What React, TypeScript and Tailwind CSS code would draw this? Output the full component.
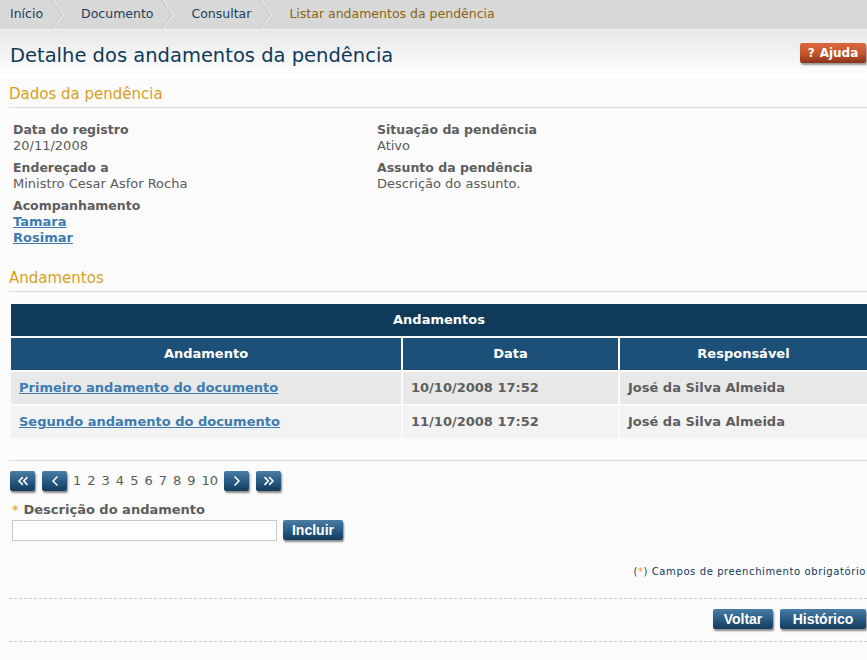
import { ChevronLeft, ChevronRight, ChevronsLeft, ChevronsRight } from 'lucide-react';

const verdana = { fontFamily: 'Verdana, "DejaVu Sans", sans-serif' };

const Sep = () => (
  <svg width="20" height="29" viewBox="0 0 20 29" className="shrink-0 block">
    <polyline points="4,0 14,14.5 4,29" fill="none" stroke="#b8b8b8" strokeWidth="1" />
    <polyline points="5,0 15,14.5 5,29" fill="none" stroke="#f4f4f4" strokeWidth="1" />
  </svg>
);

const BlueButton = ({ children, className = '' }: { children: React.ReactNode; className?: string }) => (
  <button
    className={`h-[20px] rounded-[2px] bg-gradient-to-b from-[#4a7ea6] via-[#2a5c85] to-[#123c5e] text-white font-bold text-[14px] leading-[20px] shadow-[1px_2px_2px_rgba(0,0,0,0.45)] flex items-center justify-center ${className}`}
    style={{ fontFamily: '"Liberation Sans", Arial, sans-serif' }}
  >
    {children}
  </button>
);

const Field = ({ label, value }: { label: string; value: string }) => (
  <div className="mb-[6px]">
    <div className="font-bold text-[#5e5e5e] text-[12.5px] leading-[16px]">{label}</div>
    <div className="text-[#5a5a5a] text-[13px] leading-[16px]">{value}</div>
  </div>
);

export default function App() {
  const rows = [
    { a: 'Primeiro andamento do documento', d: '10/10/2008 17:52', r: 'José da Silva Almeida', bg: 'bg-[#e8e8e8]' },
    { a: 'Segundo andamento do documento', d: '11/10/2008 17:52', r: 'José da Silva Almeida', bg: 'bg-[#f3f3f3]' },
  ];

  return (
    <div className="w-[867px] h-[660px] overflow-hidden bg-[#fbfbfb]" style={verdana}>
      {/* breadcrumb */}
      <div className="h-[30px] bg-[#d8d8d8] border-b border-[#f2f2f2] flex items-center pl-[10px] text-[12.5px]">
        <span className="text-[#1b3e5c]">Início</span>
        <span className="ml-[5px] mr-[13px]"><Sep /></span>
        <span className="text-[#1b3e5c]">Documento</span>
        <span className="ml-[5px] mr-[13px]"><Sep /></span>
        <span className="text-[#1b3e5c]">Consultar</span>
        <span className="ml-[5px] mr-[13px]"><Sep /></span>
        <span className="text-[#8a6510]">Listar andamentos da pendência</span>
      </div>

      {/* title */}
      <div className="h-[48px] bg-gradient-to-b from-[#e8e8e8] to-[#ffffff] flex items-center justify-between pl-[10px] pr-[1px]">
        <h1 className="text-[19.5px] text-[#0f3a5a] mt-[3px]">Detalhe dos andamentos da pendência</h1>
        <div className="h-[20px] w-[66px] rounded-[2px] bg-gradient-to-b from-[#d9683f] via-[#c9552e] to-[#8a3418] shadow-[1px_2px_2px_rgba(0,0,0,0.4)] text-white font-bold text-[12px] flex items-center justify-center gap-[5px] -mt-[2px]">
          <span>?</span>
          <span>Ajuda</span>
        </div>
      </div>

      <div className="pl-[9px]">
        {/* Dados da pendencia */}
        <div className="mt-[6px] text-[15px] leading-[20px] text-[#d9a01f] pb-[3px] border-b border-[#dcdcdc]">Dados da pendência</div>

        <div className="flex pl-[4px] pt-[14px]">
          <div className="w-[364px]">
            <Field label="Data do registro" value="20/11/2008" />
            <Field label="Endereçado a" value="Ministro Cesar Asfor Rocha" />
            <div className="font-bold text-[#5e5e5e] text-[12.5px] leading-[16px]">Acompanhamento</div>
            <a className="block font-bold text-[#3d7bb0] underline text-[13px] leading-[16px]">Tamara</a>
            <a className="block font-bold text-[#3d7bb0] underline text-[13px] leading-[16px]">Rosimar</a>
          </div>
          <div>
            <Field label="Situação da pendência" value="Ativo" />
            <Field label="Assunto da pendência" value="Descrição do assunto." />
          </div>
        </div>

        {/* Andamentos */}
        <div className="mt-[22px] text-[15px] leading-[20px] text-[#d9a01f] pb-[3px] border-b border-[#dcdcdc]">Andamentos</div>

        <div className="mt-[12px] ml-[2px] text-[13px]">
          <div className="h-[32px] bg-[#0f3a5a] text-white font-bold flex items-center justify-center">Andamentos</div>
          <div className="mt-[2px] flex gap-[2px] h-[32px] text-white font-bold">
            <div className="w-[390px] bg-[#1d5078] flex items-center justify-center">Andamento</div>
            <div className="w-[215px] bg-[#1d5078] flex items-center justify-center">Data</div>
            <div className="flex-1 bg-[#1d5078] flex items-center justify-center">Responsável</div>
          </div>
          {rows.map((r) => (
            <div key={r.a} className="mt-[2px] flex gap-[2px] h-[32px] font-bold">
              <div className={`w-[390px] ${r.bg} flex items-center pl-[8px]`}>
                <a className="text-[#3d7bb0] underline">{r.a}</a>
              </div>
              <div className={`w-[215px] ${r.bg} flex items-center pl-[8px] text-[#5e5e5e]`}>{r.d}</div>
              <div className={`flex-1 ${r.bg} flex items-center pl-[8px] text-[#5e5e5e]`}>{r.r}</div>
            </div>
          ))}
        </div>

        <div className="mt-[22px] border-b border-[#dcdcdc]" />

        {/* pagination */}
        <div className="mt-[10px] ml-[1px] flex items-center">
          <BlueButton className="w-[25px]"><ChevronsLeft size={16} strokeWidth={2.5} /></BlueButton>
          <BlueButton className="w-[25px] ml-[7px]"><ChevronLeft size={16} strokeWidth={2.5} /></BlueButton>
          <div className="ml-[6px] flex gap-[6px] text-[13px] leading-[20px] text-[#5a5a5a]">
            {['1', '2', '3', '4', '5', '6', '7', '8', '9', '10'].map((n) => (
              <span key={n}>{n}</span>
            ))}
          </div>
          <BlueButton className="w-[25px] ml-[6px]"><ChevronRight size={16} strokeWidth={2.5} /></BlueButton>
          <BlueButton className="w-[25px] ml-[7px]"><ChevronsRight size={16} strokeWidth={2.5} /></BlueButton>
        </div>

        {/* form */}
        <div className="mt-[11px] ml-[3px] text-[13px] leading-[16px] text-[#5e5e5e] font-bold flex items-center">
          <span className="text-[#d9a01f] font-normal mr-[5px]">*</span>
          <span>Descrição do andamento</span>
        </div>
        <div className="mt-[2px] ml-[3px] flex items-center">
          <input className="w-[265px] h-[21px] border border-[#c8c8c8] bg-white" />
          <BlueButton className="w-[60px] ml-[6px] -mt-[2px]">Incluir</BlueButton>
        </div>

        <div className="mt-[24px] text-right text-[10px] leading-[14px] text-[#0f3a5a] tracking-[0.6px] pr-[1px]">
          (<span className="text-[#d9a01f]">*</span>) Campos de preenchimento obrigatório
        </div>

        <div className="mt-[19px] border-t border-dashed border-[#cccccc]" />
        <div className="mt-[10px] flex justify-end gap-[7px] pr-[1px]">
          <BlueButton className="w-[60px]">Voltar</BlueButton>
          <BlueButton className="w-[86px]">Histórico</BlueButton>
        </div>
        <div className="mt-[12px] border-t border-dashed border-[#cccccc]" />
      </div>
    </div>
  );
}
